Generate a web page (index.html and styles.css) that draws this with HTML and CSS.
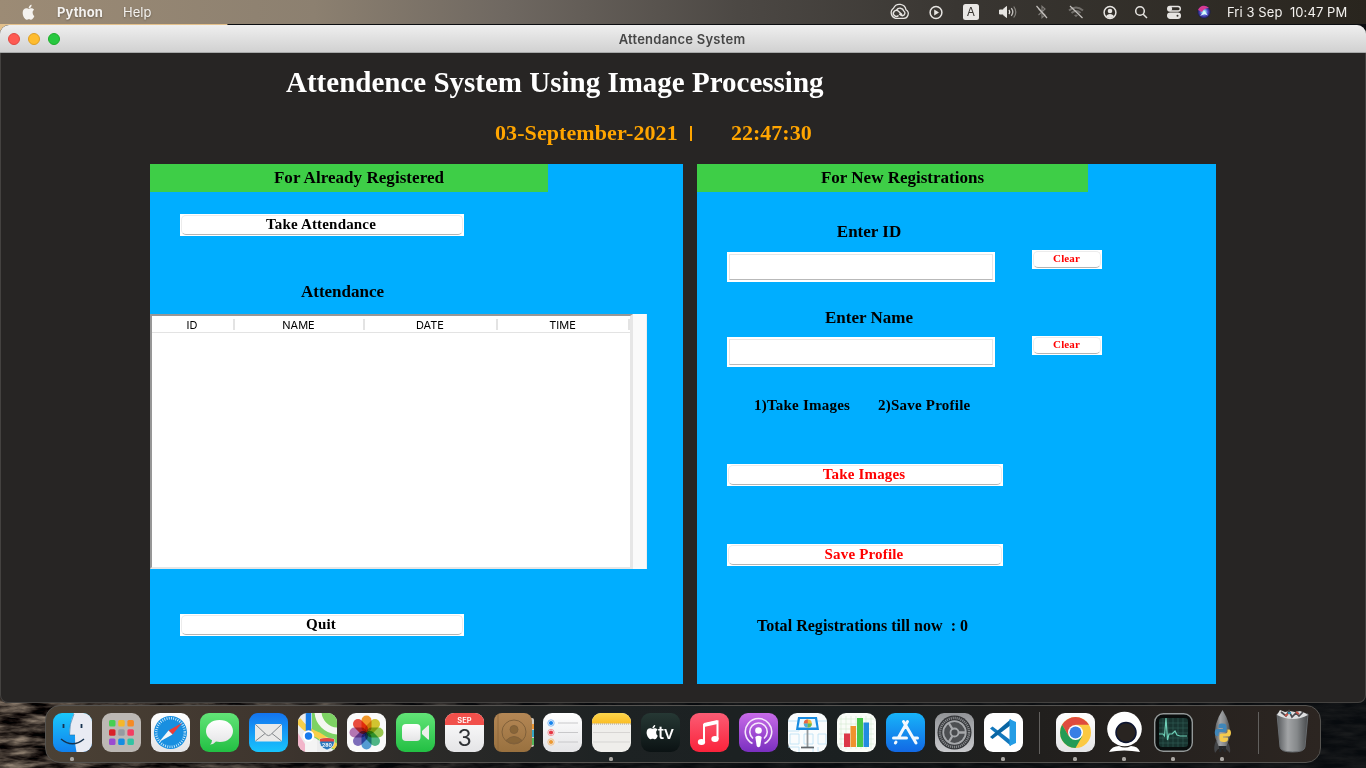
FILE: index.html
```html
<!DOCTYPE html>
<html lang="en">
<head>
<meta charset="utf-8">
<title>Attendance System</title>
<link rel="stylesheet" href="styles.css">
</head>
<body>
<svg class="wallpaper" width="1366" height="768" aria-hidden="true">
  <defs>
    <filter id="rock" x="0" y="0" width="100%" height="100%" color-interpolation-filters="sRGB">
      <feTurbulence type="fractalNoise" baseFrequency="0.035 0.16" numOctaves="4" seed="8"/>
      <feColorMatrix values="1.1 0 0 0 -.28  1.02 0 0 0 -.28  .9 0 0 0 -.25  0 0 0 0 1"/>
    </filter>
    <linearGradient id="shade"><stop offset="0" stop-color="#080b10" stop-opacity=".05"/><stop offset=".3" stop-color="#080b10" stop-opacity=".6"/><stop offset=".5" stop-color="#080c10" stop-opacity=".88"/><stop offset="1" stop-color="#080c10" stop-opacity=".88"/></linearGradient>
    <linearGradient id="gBlue" x2="0" y2="1"><stop stop-color="#1ac8fb"/><stop offset="1" stop-color="#1180ed"/></linearGradient>
    <linearGradient id="gMail" x2="0" y2="1"><stop stop-color="#1474f0"/><stop offset="1" stop-color="#18c4fc"/></linearGradient>
    <linearGradient id="gGreen" x2="0" y2="1"><stop stop-color="#62e477"/><stop offset="1" stop-color="#22bf43"/></linearGradient>
    <linearGradient id="gWhite" x2="0" y2="1"><stop stop-color="#fff"/><stop offset="1" stop-color="#e4e4e6"/></linearGradient>
    <linearGradient id="gRed" x2="0" y2="1"><stop stop-color="#fb5c74"/><stop offset="1" stop-color="#fa233b"/></linearGradient>
    <linearGradient id="gPurple" x2="0" y2="1"><stop stop-color="#c86be8"/><stop offset="1" stop-color="#7a2fc0"/></linearGradient>
    <linearGradient id="gYellow" x2="0" y2="1"><stop stop-color="#fdd64c"/><stop offset="1" stop-color="#fbbd24"/></linearGradient>
    <linearGradient id="gTv" x2="0" y2="1"><stop stop-color="#263834"/><stop offset="1" stop-color="#0b1213"/></linearGradient>
    <linearGradient id="gBrown" x2="0" y2="1"><stop stop-color="#b48755"/><stop offset="1" stop-color="#99713f"/></linearGradient>
    <linearGradient id="gGray" x2="0" y2="1"><stop stop-color="#929497"/><stop offset="1" stop-color="#c9cacd"/></linearGradient>
    <linearGradient id="gStore" x2="0" y2="1"><stop stop-color="#17b4fa"/><stop offset="1" stop-color="#1268e4"/></linearGradient>
    <linearGradient id="gMetal"><stop stop-color="#55585b"/><stop offset=".35" stop-color="#a2a4a6"/><stop offset=".65" stop-color="#85888a"/><stop offset="1" stop-color="#47494b"/></linearGradient>
    <radialGradient id="gSiri"><stop stop-color="#fff"/><stop offset=".25" stop-color="#8ed6ef"/><stop offset=".6" stop-color="#5148c8"/><stop offset="1" stop-color="#171b48"/></radialGradient>
    <clipPath id="tile"><rect width="39" height="39" rx="9"/></clipPath>
    <path id="apple" d="M11.2 7.4c0-1.6 1.3-2.3 1.4-2.4-.8-1.1-2-1.3-2.4-1.3-1-.1-2 .6-2.5.6s-1.3-.6-2.2-.6C3.500 3.800 2 5.100 2 7.800c0 3 2.100 6.300 3.700 6.300.8 0 1.100-.5 2.100-.5s1.200.5 2.100.5c1.300 0 2.500-2.200 2.900-3.400-.1 0-1.600-.7-1.600-3.300zM9.600 2.700c.5-.6.8-1.300.7-2.100-.7 0-1.500.5-2 1-.4.500-.8 1.300-.7 2 .8.100 1.500-.4 2-.9z"/>
  </defs>
  <rect width="1366" height="768" fill="#0b0d10"/>
  <rect y="690" width="1366" height="78" filter="url(#rock)"/>
  <rect y="690" width="1366" height="78" fill="url(#shade)"/>
  <path d="M0 20h231l-4 5H8L0 34z" fill="#e3c08b"/>
</svg>

<header class="menubar">
  <svg class="menubar-apple" width="15" height="16" fill="#f4f2ef"><use href="#apple" transform="translate(-.5 .2) scale(1.08 1.1)"/></svg>
  <span class="menubar-app">Python</span>
  <span class="menubar-item">Help</span>
  <div class="status">
    <svg width="20" height="16" fill="none" stroke="#e6e4e1"><path d="M6.500 14.300A5.700 5.700 0 0 1 4.500 4.200 6.600 6.600 0 0 1 17 5.800a4.600 4.600 0 0 1-3 8.500z" stroke-width="1.300"/><path d="M9.500 11.500a3 3 0 1 1-.3-4.500l4 3.700M7.500 6.200a4 4 0 0 1 7.300.8c1.800 1.200 1.400 4.500-1.200 4.700-1.500 0-2.400-1-3.300-1.900" stroke-width="1.400"/></svg>
    <svg width="16" height="16"><circle cx="8" cy="8.500" r="5.900" fill="none" stroke="#e6e4e1" stroke-width="1.500"/><path d="M6.200 5.600v5.800L11 8.500z" fill="#e6e4e1"/></svg>
    <span class="input-source">A</span>
    <svg width="20" height="16" fill="none" stroke="#e6e4e1"><path d="M1.500 6h3l4-3.500v11L4.500 10h-3z" fill="#e6e4e1"/><path d="M11 6q1.500 2 0 4" stroke-width="1.300"/><path d="M13.300 4.200q3 3.800 0 7.600" stroke-width="1.300" opacity=".8"/><path d="M15.700 2.500q4.200 5.500 0 11" stroke-width="1.200" opacity=".45"/></svg>
    <svg width="14" height="16" fill="none"><path d="M3.500 5 10 11l-3 2.700V2.300L10 5l-6.500 6" stroke="#7f7c78" stroke-width="1.200"/><path d="M1.500 2 12 14" stroke="#c4c1bd" stroke-width="1.200"/></svg>
    <svg width="18" height="16" fill="none"><path d="M2 6.500q7-6 14 0M4.500 9q4.500-4 9 0" stroke="#716e6a" stroke-width="2"/><path d="M7 11.200q2-1.500 4 0l-2 2z" fill="#716e6a"/><path d="M3 2 15.500 14" stroke="#c4c1bd" stroke-width="1.200"/></svg>
    <svg width="16" height="16"><circle cx="8" cy="8.500" r="5.900" fill="none" stroke="#e6e4e1" stroke-width="1.500"/><circle cx="8" cy="7" r="2.300" fill="#e6e4e1"/><path d="M4 12.500c1-3.500 7-3.500 8 0q-4 3-8 0" fill="#e6e4e1"/></svg>
    <svg width="14" height="16" fill="none" stroke="#e6e4e1" stroke-width="1.500"><circle cx="6" cy="7" r="4.300"/><path d="m9.200 10.200 3.800 3.800"/></svg>
    <svg width="16" height="16" fill="none" stroke="#e6e4e1" stroke-width="1.400"><rect x="1.700" y="2.500" width="12.600" height="4.500" rx="2.250"/><circle cx="4" cy="4.750" r="1.500" fill="#e6e4e1"/><rect x="1.700" y="9.300" width="12.600" height="5" rx="2.500" fill="#e6e4e1"/><circle cx="11.500" cy="11.800" r="1" fill="#33302b" stroke="none"/></svg>
    <svg width="14" height="16"><circle cx="7" cy="8" r="6.500" fill="url(#gSiri)"/><path d="M1 6a6.500 6.500 0 0 1 11-2Q7 4 5 8z" fill="#d83b92"/><path d="m3 12 4.500-5 3.500 4.500L7.500 10z" fill="#dffaff"/></svg>
  </div>
  <span class="clock">Fri 3 Sep&nbsp; 10:47 PM</span>
</header>

<main class="window">
  <div class="titlebar">
    <div class="lights"><i class="light light-close"></i><i class="light light-min"></i><i class="light light-max"></i></div>
    <span class="window-title">Attendance System</span>
  </div>
  <h1 class="heading">Attendence System Using Image Processing</h1>
  <div class="datetime"><span class="date">03-September-2021</span><i class="bar"></i><span>22:47:30</span></div>
  <div class="panels">
    <section class="panel panel-left">
      <h2 class="panel-head">For Already Registered</h2>
      <button class="btn btn-take">Take Attendance</button>
      <h3 class="label table-label">Attendance</h3>
      <div class="table">
        <div class="tree">
          <div class="tree-head"><span>ID</span><span>NAME</span><span>DATE</span><span>TIME</span></div>
        </div>
        <div class="scrollbar"></div>
      </div>
      <button class="btn btn-quit">Quit</button>
    </section>
    <section class="panel panel-right">
      <h2 class="panel-head">For New Registrations</h2>
      <div class="field">
        <div class="field-main"><label class="label">Enter ID</label><div class="entry"></div></div>
        <button class="btn btn-clear">Clear</button>
      </div>
      <div class="field field-name">
        <div class="field-main"><label class="label">Enter Name</label><div class="entry"></div></div>
        <button class="btn btn-clear">Clear</button>
      </div>
      <p class="steps"><span>1)Take Images</span><span>2)Save Profile</span></p>
      <button class="btn btn-red">Take Images</button>
      <button class="btn btn-red btn-save">Save Profile</button>
      <p class="total">Total Registrations till now&nbsp; : 0</p>
    </section>
  </div>
</main>

<nav class="dock">
  <div class="app running"><svg width="39" height="39"><g clip-path="url(#tile)"><rect width="39" height="39" fill="url(#gBlue)"/><path d="M21 0q-5 11-4.500 22H22q-.5 9 1.500 17H39V0z" fill="#e9ebf3"/></g><path d="M10.500 11v4M28.500 11v4" stroke="#17334f" stroke-width="1.800"/><path d="M8 26q11.500 9.500 23 0" fill="none" stroke="#17334f" stroke-width="1.500"/><path d="M21 1q-5 10-4.500 21H22" fill="none" stroke="#286c9f" stroke-width=".6"/></svg></div>
  <div class="app"><svg width="39" height="39"><rect width="39" height="39" rx="9" fill="#bcb8b4"/><g><rect x="7" y="7" width="6.500" height="6.500" rx="1.500" fill="#46cf52"/><rect x="16.200" y="7" width="6.500" height="6.500" rx="1.500" fill="#f5b72c"/><rect x="25.400" y="7" width="6.500" height="6.500" rx="1.500" fill="#f58a24"/><rect x="7" y="16.200" width="6.500" height="6.500" rx="1.500" fill="#d92228"/><rect x="16.200" y="16.200" width="6.500" height="6.500" rx="1.500" fill="#969ba1"/><rect x="25.400" y="16.200" width="6.500" height="6.500" rx="1.500" fill="#f33e62"/><rect x="7" y="25.400" width="6.500" height="6.500" rx="1.500" fill="#9a4bd1"/><rect x="16.200" y="25.400" width="6.500" height="6.500" rx="1.500" fill="#168de2"/><rect x="25.400" y="25.400" width="6.500" height="6.500" rx="1.500" fill="#31c3a3"/></g></svg></div>
  <div class="app"><svg width="39" height="39"><rect width="39" height="39" rx="9" fill="url(#gWhite)"/><circle cx="19.500" cy="19.500" r="16.500" fill="#198fe0"/><circle cx="19.500" cy="19.500" r="14.300" fill="none" stroke="#e0f4ff" stroke-width="2.500" stroke-dasharray=".8 1.450"/><path d="M31 10 21.500 21.500l-4-4z" fill="#ed3c38"/><path d="m8 29 9.500-11.500 4 4z" fill="#f4f6f8"/></svg></div>
  <div class="app"><svg width="39" height="39"><rect width="39" height="39" rx="9" fill="url(#gGreen)"/><path d="M19.500 7C11.500 7 6 11.800 6 18c0 4 2.300 7.400 6 9.300q0 2.700-2 4.300 4-.4 6-3c10 1.800 17-3.300 17-10.600C33 11.800 27.500 7 19.500 7z" fill="url(#gWhite)"/></svg></div>
  <div class="app"><svg width="39" height="39"><rect width="39" height="39" rx="9" fill="url(#gMail)"/><rect x="6" y="11" width="27" height="17.500" rx="1.500" fill="#e9e9e8"/><path d="m6.500 11.500 11 10.300q2 1.700 4 0l11-10.300M6.500 28 16 20.500M32.500 28 23 20.500" fill="none" stroke="#84888c"/></svg></div>
  <div class="app"><svg width="39" height="39"><g clip-path="url(#tile)"><rect width="39" height="39" fill="#ececed"/><path d="M14 0h25v39L14 23z" fill="#7dd263"/><path d="M20-2a20 20 0 0 0 20 20" fill="none" stroke="#f4f6f1" stroke-width="7"/><path d="M0 7Q8 18 20 22l22 14" fill="none" stroke="#f8cf49" stroke-width="6"/><path d="M0 20 12 39H0z" fill="#f2b5ca"/><path d="M19 39V26L7 25v14" fill="#f4f4f4"/><path d="M10.500 0v23" stroke="#197be5" stroke-width="5.500"/></g><circle cx="10.500" cy="23" r="4.700" fill="#167aed" stroke="#fff" stroke-width="2"/><path d="M22 26q7-2 14 0 2 8-7 11-9-3-7-11z" fill="#2875bd" stroke="#fff" stroke-width=".6"/><path d="M22 26q7-2 14 0v2.500H22z" fill="#e04640"/><text class="shield" x="29" y="33.500">280</text></svg></div>
  <div class="app"><svg width="39" height="39"><rect width="39" height="39" rx="9" fill="#fafafa"/><g class="petals"><rect x="14.500" y="2.500" width="10" height="17" rx="5" fill="#f69a29"/><rect x="14.500" y="2.500" width="10" height="17" rx="5" fill="#d6c831" transform="rotate(45 19.500 19.500)"/><rect x="14.500" y="2.500" width="10" height="17" rx="5" fill="#9cca50" transform="rotate(90 19.500 19.500)"/><rect x="14.500" y="2.500" width="10" height="17" rx="5" fill="#50b989" transform="rotate(135 19.500 19.500)"/><rect x="14.500" y="2.500" width="10" height="17" rx="5" fill="#559fd7" transform="rotate(180 19.500 19.500)"/><rect x="14.500" y="2.500" width="10" height="17" rx="5" fill="#806fbe" transform="rotate(225 19.500 19.500)"/><rect x="14.500" y="2.500" width="10" height="17" rx="5" fill="#b878b6" transform="rotate(270 19.500 19.500)"/><rect x="14.500" y="2.500" width="10" height="17" rx="5" fill="#ed4c3f" transform="rotate(315 19.500 19.500)"/></g></svg></div>
  <div class="app"><svg width="39" height="39"><rect width="39" height="39" rx="9" fill="url(#gGreen)"/><rect x="6" y="11" width="18.500" height="17" rx="4" fill="url(#gWhite)"/><path d="m26 18 6-5.500q1-.5 1 .5v13q0 1-1 .5L26 21z" fill="#ecefea"/></svg></div>
  <div class="app"><svg width="39" height="39"><g clip-path="url(#tile)"><rect width="39" height="39" fill="url(#gWhite)"/><rect width="39" height="12" fill="#f1504b"/></g><text class="cal-month" x="19.500" y="9.500">SEP</text><text class="cal-day" x="19.500" y="33">3</text></svg></div>
  <div class="app"><svg width="39" height="39"><path d="M34 5h4q2 0 2 2v25q0 2-2 2h-4z" fill="#d1cbc2"/><path d="M38 11h2v5h-2z" fill="#e89535"/><path d="M38 17h2v7h-2z" fill="#36a8c5"/><path d="M38 25h2v7h-2z" fill="#55b75b"/><rect width="38" height="39" rx="8" fill="url(#gBrown)"/><path d="M4 1v37" stroke="#8c663b" stroke-width=".8"/><g fill="none" stroke="#80603a"><circle cx="20" cy="19" r="12"/><circle cx="20" cy="16.500" r="4" fill="#886538"/><path d="M12 27.500q8-8 16 0-8 6-16 0z" fill="#886538"/></g></svg></div>
  <div class="app"><svg width="39" height="39"><rect width="39" height="39" rx="9" fill="url(#gWhite)"/><g fill="none" stroke-width="1"><circle cx="8" cy="10" r="3.200" stroke="#86bdf5"/><circle cx="8" cy="19.500" r="3.200" stroke="#f49da0"/><circle cx="8" cy="29" r="3.200" stroke="#f4c48d"/></g><circle cx="8" cy="10" r="2.100" fill="#1684ed"/><circle cx="8" cy="19.500" r="2.100" fill="#e73644"/><circle cx="8" cy="29" r="2.100" fill="#ed982f"/><path d="M15 10h20M15 19.500h20M15 29h20" stroke="#c8c8ca"/></svg></div>
  <div class="app running"><svg width="39" height="39"><g clip-path="url(#tile)"><rect width="39" height="39" fill="#efeeeb"/><rect width="39" height="10.500" fill="url(#gYellow)"/><path d="M0 11h39" stroke="#a9a18d" stroke-dasharray="1 1"/><path d="M1 19.500h37M1 29h37" stroke="#cdcac8" stroke-width=".7"/></g></svg></div>
  <div class="app"><svg width="39" height="39"><rect width="39" height="39" rx="9" fill="url(#gTv)"/><use href="#apple" fill="#fff" transform="translate(3.500 11.500) scale(1.040)"/><text class="tv" x="17" y="25.500">tv</text></svg></div>
  <div class="app"><svg width="39" height="39"><rect width="39" height="39" rx="9" fill="url(#gRed)"/><path d="M14 28V11.500L27.500 8.500V26" fill="none" stroke="#fff" stroke-width="2"/><path d="m14 10 13.500-3v4L14 14z" fill="#fff"/><ellipse cx="11.500" cy="29" rx="3.700" ry="3" fill="#fff"/><ellipse cx="25" cy="26" rx="3.700" ry="3" fill="#fff"/></svg></div>
  <div class="app"><svg width="39" height="39"><rect width="39" height="39" rx="9" fill="url(#gPurple)"/><g fill="none" stroke="#f6e8fb" stroke-width="1.600"><path d="M13.500 30.500a13.200 13.200 0 1 1 12 0"/><path d="M14 25.500a8.700 8.700 0 1 1 11 0"/></g><circle cx="19.500" cy="17.500" r="3.300" fill="#fff"/><path d="M16.300 24q3.200-2.500 6.400 0L21.300 33q-1.800 2.500-3.600 0z" fill="#fff"/></svg></div>
  <div class="app"><svg width="39" height="39"><rect width="39" height="39" rx="9" fill="#fafcfd"/><path d="M0 8h11v10H0M29 8h10M2 21h9v10H2zM16 21h9v10h-9zM30 21h8v10h-8zM16 34h9v5M0 34h11v5M30 34v5" fill="none" stroke="#b8dff4" stroke-width=".8"/><path d="M10 4h19l2 13H8z" fill="#178be0"/><path d="M12 6h15l1.500 8.500h-18z" fill="#e9f6fe"/><circle cx="19.800" cy="10.500" r="4" fill="#f7b938"/><path d="M19.800 10.500v-4a4 4 0 0 0-4 4z" fill="#e7634a"/><path d="M15.800 10.500a4 4 0 0 0 4 4v-4z" fill="#48aee2"/><path d="M19.800 14.500a4 4 0 0 0 4-4h-4z" fill="#5fbb5b"/><path d="M19.500 17v17" stroke="#929699" stroke-width="1.800"/><path d="M13 34.500h13" stroke="#63676b" stroke-width="1.700"/></svg></div>
  <div class="app"><svg width="39" height="39"><rect width="39" height="39" rx="9" fill="#fafcf8"/><path d="M4 3v33M9 3v33M14 3v33M19 3v33M24 3v33M29 3v33M34 3v33M2 6h35M2 11h35M2 16h35M2 21h35M2 26h35M2 31h35" stroke="#d5ead0" stroke-width=".6"/><path d="M7 20.500h6V34H7z" fill="#dc3848"/><path d="M13.500 13h5.500v21h-5.500z" fill="#ef922d"/><path d="M20 5h6v29h-6z" fill="#45c64c"/><path d="M26.500 9.500H32V34h-5.500z" fill="#218bdf"/></svg></div>
  <div class="app"><svg width="39" height="39"><rect width="39" height="39" rx="9" fill="url(#gStore)"/><g stroke="#f4f9fe" stroke-width="3" stroke-linecap="round"><path d="m21.500 8.500-9 16M17.500 8.500 30 30M7.500 25h13M27 25h4.500M10 29l-.6 1"/></g></svg></div>
  <div class="app"><svg width="39" height="39"><rect width="39" height="39" rx="9" fill="url(#gGray)"/><circle cx="19.500" cy="19.500" r="17" fill="#343639"/><circle cx="19.500" cy="19.500" r="14.500" fill="none" stroke="#85878a" stroke-width="2.500" stroke-dasharray="1.200 .8"/><circle cx="19.500" cy="19.500" r="11.300" fill="#4d4f52" stroke="#a6a8ab" stroke-width="1.800"/><path d="m19.500 19.500-6-10M19.500 19.500h11.500M19.500 19.500l-6 10" stroke="#a6a8ab" stroke-width="2.300"/><circle cx="19.500" cy="19.500" r="4" fill="#484a4d" stroke="#a6a8ab" stroke-width="1.800"/></svg></div>
  <div class="app running"><svg width="39" height="39"><rect width="39" height="39" rx="9" fill="#fff"/><path d="M6 15.500 8.500 13.500 27 27.500V33z" fill="#1378bd"/><path d="m6 24 2.500 2L27 12V6z" fill="#0865a4"/><path d="m25.500 6 6.500 3v21l-6.500 3z" fill="#249de5"/></svg></div>
  <i class="divider"></i>
  <div class="app running"><svg width="39" height="39"><rect width="39" height="39" rx="9" fill="url(#gWhite)"/><circle cx="19.500" cy="19.500" r="15.500" fill="#fbc943"/><path d="M6.100 11.800A15.500 15.500 0 0 1 32.900 11.800H19.500L12.800 23.300z" fill="#df4b3e"/><path d="M6.100 11.800A15.500 15.500 0 0 0 19.500 35L26.200 23.300H12.800z" fill="#249b55"/><circle cx="19.500" cy="19.500" r="7.500" fill="#fff"/><circle cx="19.500" cy="19.500" r="6" fill="#397fe5"/></svg></div>
  <div class="app running"><svg width="39" height="39"><circle cx="19.500" cy="16" r="17.300" fill="#fff"/><circle cx="21" cy="19.500" r="10" fill="#292421" stroke="#0d1531" stroke-width="1.500"/><path d="M4 39q3-6 10-6 6 3 12 0 7 0 9 6-16-3-31 0z" fill="#fff"/></svg></div>
  <div class="app running"><svg width="39" height="39"><rect x=".7" y=".7" width="37.600" height="37.600" rx="8.500" fill="#090d0d" stroke="#939898" stroke-width="1.400"/><rect x="5" y="5" width="29" height="29" rx="3" fill="#183430"/><path d="M9 5v29M14 5v29M19 5v29M24 5v29M29 5v29M5 10h29M5 15h29M5 20h29M5 25h29M5 30h29" stroke="#345f57" stroke-width=".6"/><path d="M5 21h4l1.500 2L12 5l1.500 22L15 21h3l3-3 2 4 3 1h7" fill="none" stroke="#6fd0b8" stroke-width="1.200"/></svg></div>
  <div class="app running"><svg width="39" height="42"><path d="M13 28q-3 6-1 12l3-4h8l4 4q1-6-3-12" fill="#424447"/><path d="M19.500-3q-9 14-7.500 27l3.500 9h8l3.500-9q1.500-13-7.500-27z" fill="url(#gMetal)"/><path d="M19.500 10.500c-4 0-4 1.500-4 3.500v1h4.500v1h-6c-3 0-3 7 0 7h1.500v-2q0-2 2-2h4q2 0 2-2v-3c0-2.500-1-3.500-4-3.500z" fill="#3f86b9"/><path d="M20.500 29c4 0 4.500-1.500 4.500-3.500v-1h-5v-1h5.500c3.500 0 3-7 .5-7h-1.500v2q0 2-2 2h-4q-2 0-2 2v3c0 2.500 1 3.500 4 3.500z" fill="#f5cb4d"/><path d="M16 33h7v6h-2l-1.500-4-1.500 4h-2z" fill="#26282a"/></svg></div>
  <i class="divider divider-trash"></i>
  <div class="app app-trash"><svg width="39" height="42"><path d="M4 1h31l-3 33q-.5 5-12.500 5T7 34z" fill="url(#gMetal)" stroke="#686c70"/><path d="M4 2q16 8 31 0l-3-2-5-2-5 1-5-1-5 1-5-2z" fill="#dedfe0"/><path d="m8-1 5 4 3-5 3 6 4-4 3 3 4-4" fill="none" stroke="#4c4b50" stroke-width="1.700"/><path d="m12 3 3-2m8-2 3 2" stroke="#c65045" stroke-width="2"/><path d="M15 0h3" stroke="#348fae" stroke-width="2"/></svg></div>
</nav>
</body>
</html>
```

FILE: styles.css
```css
*, *::before, *::after { box-sizing: border-box; }
body {
  margin: 0;
  width: 1366px;
  height: 768px;
  overflow: hidden;
  display: flex;
  flex-direction: column;
  background: #0b0d10;
  font-family: Inter, "Liberation Sans", sans-serif;
}
h1, h2, h3, p { margin: 0; }
svg { display: block; overflow: visible; flex: none; }
.wallpaper { position: absolute; inset: 0; z-index: -1; }

/* Menu bar */
.menubar {
  display: flex;
  align-items: center;
  height: 24px;
  flex: none;
  margin-bottom: 1px;
  padding-left: 21px;
  color: #f4f2ef;
  font-size: 13px;
  white-space: nowrap;
  background: linear-gradient(90deg, #9c8b75, #8c8070 23%, #6f6861 37%, #4c4844 54%, #393632 70%, #29251e);
}
.menubar-app { width: 66px; margin-left: 21px; font-weight: 700; letter-spacing: .1px; text-shadow: 0 1px 2px #0005; }
.menubar-item { width: 40px; text-shadow: 0 1px 2px #0005; }
.status {
  display: grid;
  grid-template-columns: 36px 37px 34px 40px 28px 40px 27px 36px 29px 32px;
  justify-items: center;
  align-items: center;
  margin-left: 718px;
}
.input-source {
  width: 16px;
  height: 16px;
  border-radius: 2.5px;
  background: #e9e7e5;
  color: #393632;
  font-size: 12px;
  line-height: 16px;
  text-align: center;
}
.clock { margin-left: 7px; font-size: 13px; letter-spacing: .08px; }

/* Window */
.window {
  display: flex;
  flex-direction: column;
  height: 678px;
  flex: none;
  overflow: hidden;
  border-radius: 9px 9px 8px 8px;
  background: #272524;
  box-shadow: inset 0 0 0 1px #444240;
}
.titlebar {
  display: flex;
  align-items: center;
  height: 28px;
  flex: none;
  padding-left: 8px;
  border-bottom: 1px solid #a7a9a9;
  background: linear-gradient(#efefef, #d1d1d1);
}
.lights { display: flex; gap: 8px; }
.light { width: 12px; height: 12px; border-radius: 50%; }
.light-close { background: #fe5a52; border: 1px solid #df4841; }
.light-min { background: #febc2e; border: 1px solid #dd9e24; }
.light-max { background: #28c840; border: 1px solid #1dad2b; }
.window-title { flex: 1; padding-right: 62px; text-align: center; color: #464646; font-size: 13px; font-weight: 600; letter-spacing: .24px; }

.heading, .datetime, .panels, .btn { font-family: "Liberation Serif", "Times New Roman", serif; font-weight: 700; }
.heading { margin: 12px 0 0 286px; height: 35px; line-height: 34px; font-size: 29px; color: #fff; }
.datetime { display: flex; align-items: center; margin: 20px 0 0 495px; height: 26px; font-size: 22px; color: #ffa500; }
.date { width: 195px; letter-spacing: .09px; }
.bar { width: 2px; height: 15px; margin-right: 39px; background: #ffa500; }
.panels { display: flex; gap: 14px; margin: 18px 0 0 150px; }
.panel { height: 520px; display: flex; flex-direction: column; align-items: flex-start; background: #00aeff; color: #000; }
.panel-left { width: 533px; }
.panel-right { width: 519px; }
.panel-head { width: 391px; height: 28px; padding-left: 20px; background: #3ece47; font-size: 17px; line-height: 28px; text-align: center; }
.panel-left .panel-head { width: 398px; letter-spacing: .05px; }
.label { font-size: 17px; line-height: 20px; font-weight: 700; text-align: center; }

.btn {
  width: 284px;
  height: 22px;
  flex: none;
  margin: 0 0 0 30px;
  padding: 0 2px 2px 0;
  border: 1px solid #fff;
  border-radius: 0;
  background: #fff;
  color: #000;
  font-size: 15px;
  letter-spacing: .18px;
  line-height: 18px;
  display: grid;
  place-items: center;
  position: relative;
}
.btn::after {
  content: "";
  position: absolute;
  inset: 0;
  border: 1px solid #ececec;
  border-bottom-color: #b4b4b4;
  border-radius: 5px;
}
.btn-take { margin-top: 22px; }
.table-label { width: 385px; margin-top: 46px; }
.table { display: flex; width: 497px; height: 255px; margin-top: 12px; background: #fafafa; }
.tree { width: 483px; border-style: solid; border-width: 2px 3px 2px 2px; border-color: #979797 #e6e6e6 #e6e6e6 #979797; background: #fff; }
.scrollbar { width: 14px; border-right: 1px solid #eee; }
.tree-head { display: grid; grid-template-columns: 83px 130px 133px 1fr; align-items: center; height: 17px; border-bottom: 1px solid #e3e3e3; font: 11px/16px Inter, sans-serif; text-align: center; }
.tree-head span { height: 11px; line-height: 12px; padding-right: 1px; border-right: 2px solid #e3e3e3; }
.btn-quit { margin-top: 45px; }

.field { display: flex; margin: 30px 0 0 30px; }
.field-main { width: 268px; }
.field .label { display: block; margin-left: 16px; }
.entry { height: 30px; margin-top: 10px; padding: 2px; background: #fff; }
.entry::before { content: ""; display: block; height: 26px; border: 1px solid #e6e6e6; border-bottom-color: #b9b9b9; }
.btn-clear { width: 70px; height: 19px; margin: 28px 0 0 37px; padding: 0 1px 2px 0; font-size: 11px; line-height: 15px; letter-spacing: .12px; }
.btn-clear, .btn-red { color: #ff0000; }
.field-name { margin-top: 26px; }
.field-name .entry { margin-top: 9px; }
.steps { display: flex; gap: 28px; margin: 28px 0 0 57px; font-size: 15px; line-height: 20px; letter-spacing: .22px; }
.btn-red { width: 276px; margin-top: 49px; }
.btn-save { margin-top: 58px; }
.total { margin: 50px 0 0 60px; font-size: 16px; line-height: 20px; letter-spacing: .03px; }

/* Dock */
.dock {
  display: flex;
  width: 1276px;
  height: 58px;
  flex: none;
  margin: 2px 0 0 45px;
  padding: 7px 2px 0;
  border: 1px solid #555350;
  border-radius: 15px;
  background: linear-gradient(90deg, #4b4135 0, #3e352e 18%, #2b2a28 30%, #1d2223 45%, #1b2021 63%, #211f1d 78%, #2c2521);
}
.app { position: relative; display: flex; justify-content: center; width: 49px; height: 47px; flex: none; }
.app-trash { width: 47px; }
.running::after { content: ""; position: absolute; left: 22px; bottom: -1px; width: 4px; height: 4px; border-radius: 1.5px; background: #aaa7a3; }
.divider { width: 1px; height: 42px; flex: none; margin: -1px 11px 0; background: #62605e; }
.divider-trash { margin-right: 10px; }
.petals rect { mix-blend-mode: multiply; }
.shield { font: 700 5px Inter, sans-serif; fill: #fff; text-anchor: middle; }
.cal-month { font: 600 7.5px Inter, sans-serif; fill: #fff; text-anchor: middle; }
.cal-day { font: 400 23px Inter, sans-serif; fill: #303236; text-anchor: middle; }
.tv { font: 500 18px Inter, sans-serif; fill: #fff; letter-spacing: -.8px; }
```
